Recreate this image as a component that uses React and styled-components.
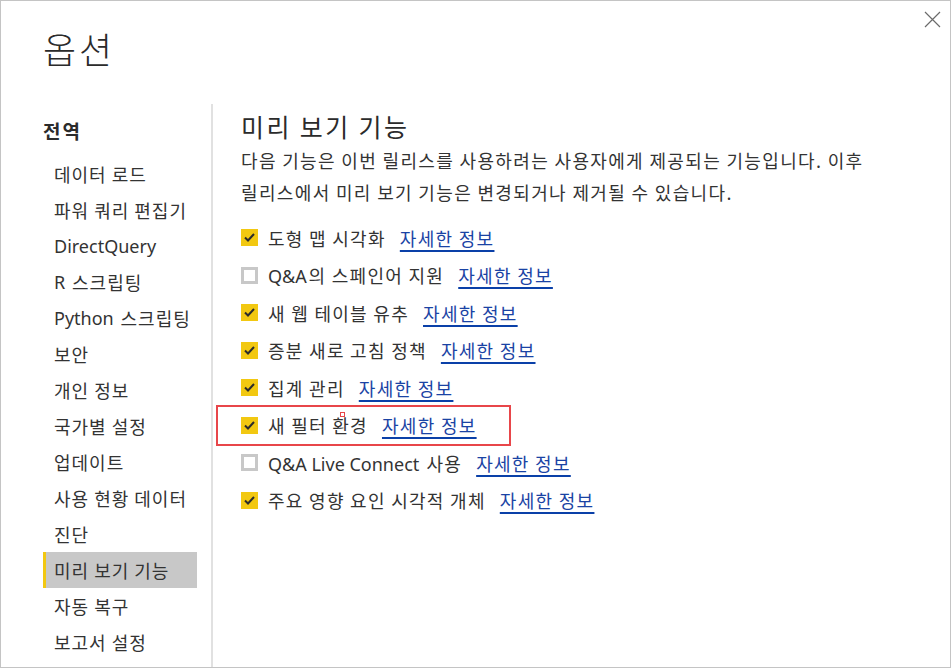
import React from 'react';
import styled, { createGlobalStyle } from 'styled-components';

const navItems = [
  '데이터 로드',
  '파워 쿼리 편집기',
  'DirectQuery',
  'R 스크립팅',
  'Python 스크립팅',
  '보안',
  '개인 정보',
  '국가별 설정',
  '업데이트',
  '사용 현황 데이터',
  '진단',
  '미리 보기 기능',
  '자동 복구',
  '보고서 설정',
];

const features = [
  { label: '도형 맵 시각화', checked: true },
  { label: 'Q&A의 스페인어 지원', checked: false },
  { label: '새 웹 테이블 유추', checked: true },
  { label: '증분 새로 고침 정책', checked: true },
  { label: '집계 관리', checked: true },
  { label: '새 필터 환경', checked: true, highlight: true },
  { label: 'Q&A Live Connect 사용', checked: false },
  { label: '주요 영향 요인 시각적 개체', checked: true },
];

// Latin runs get their own font and no extra tracking
const Mixed = ({ text }) =>
  text
    .split(/([A-Za-z&]+(?: [A-Za-z&]+)*)/)
    .map((part, i) => (i % 2 ? <Latin key={i}>{part}</Latin> : part));

const App = () => {
  return (
    <>
      <GlobalStyle />
      <Window>
        <CloseButton aria-label="닫기">
          <svg width="17" height="17" viewBox="0 0 17 17">
            <path d="M1 1 L16 16 M16 1 L1 16" stroke="#6b6b6b" strokeWidth="1.2" fill="none" />
          </svg>
        </CloseButton>
        <Header>
          <Title>옵션</Title>
        </Header>
        <Body>
          <Nav>
            <NavHeading>전역</NavHeading>
            {navItems.map((item) => (
              <NavItem key={item} $active={item === '미리 보기 기능'}>
                <Mixed text={item} />
              </NavItem>
            ))}
          </Nav>
          <Content>
            <Heading>미리 보기 기능</Heading>
            <Description>
              다음 기능은 이번 릴리스를 사용하려는 사용자에게 제공되는 기능입니다. 이후
              <br />
              릴리스에서 미리 보기 기능은 변경되거나 제거될 수 있습니다.
            </Description>
            <FeatureList>
              {features.map((f) => (
                <FeatureRow key={f.label} $highlight={f.highlight}>
                  <CheckBox $checked={f.checked}>
                    {f.checked && (
                      <svg width="11" height="9" viewBox="0 0 11 9">
                        <path d="M1 4.5 L4 7.5 L10 1" stroke="#2b2b2b" strokeWidth="2" fill="none" />
                      </svg>
                    )}
                  </CheckBox>
                  <FeatureLabel>
                    <Mixed text={f.label} />
                    {f.highlight && <Marker />}
                  </FeatureLabel>
                  <MoreLink href="#">자세한 정보</MoreLink>
                </FeatureRow>
              ))}
            </FeatureList>
          </Content>
        </Body>
      </Window>
    </>
  );
};

export default App;

const GlobalStyle = createGlobalStyle`
  html, body {
    margin: 0;
    padding: 0;
    background: #ffffff;
  }
  body {
    font-family: "Noto Sans CJK KR", "Noto Sans", sans-serif;
    color: #333333;
  }
`;

const Latin = styled.span`
  font-family: "Noto Sans", "Noto Sans CJK KR", sans-serif;
  letter-spacing: 0;
  margin-right: 0.1em;
`;

const Window = styled.div`
  position: relative;
  box-sizing: border-box;
  width: 951px;
  height: 668px;
  border: 1px solid #c4c4c4;
  background: #ffffff;
  overflow: hidden;
  display: flex;
  flex-direction: column;
`;

const CloseButton = styled.button`
  position: absolute;
  top: 9px;
  right: 8px;
  width: 19px;
  height: 19px;
  padding: 0;
  border: none;
  background: transparent;
  display: flex;
  align-items: center;
  justify-content: center;
`;

const Header = styled.div`
  height: 103px;
  padding-left: 42px;
  display: flex;
  align-items: center;
  box-sizing: border-box;
  padding-bottom: 10px;
`;

const Title = styled.h1`
  margin: 0;
  font-weight: 300;
  font-size: 36px;
  line-height: 44px;
  letter-spacing: 3px;
  color: #2b2b2b;
`;

const Body = styled.div`
  flex: 1;
  display: grid;
  grid-template-columns: 212px 1fr;
  min-height: 0;
`;

const Nav = styled.div`
  border-right: 2px solid #e1e1e1;
  padding-left: 42px;
  display: flex;
  flex-direction: column;
`;

const NavHeading = styled.div`
  height: 52px;
  display: flex;
  align-items: center;
  font-weight: 700;
  font-size: 19px;
  letter-spacing: 2px;
  color: #2b2b2b;
`;

const NavItem = styled.div`
  width: 154px;
  height: 36px;
  box-sizing: border-box;
  display: flex;
  align-items: center;
  padding-left: ${(p) => (p.$active ? '8px' : '11px')};
  border-left: ${(p) => (p.$active ? '3px solid #f2c811' : 'none')};
  background: ${(p) => (p.$active ? '#c8c8c8' : 'transparent')};
  font-size: 18px;
  letter-spacing: 1px;
  color: #333333;
  white-space: pre;
`;

const Content = styled.div`
  padding-left: 28px;
  padding-top: 4px;
`;

const Heading = styled.h2`
  margin: 0;
  height: 36px;
  display: flex;
  align-items: center;
  font-weight: 400;
  font-size: 25px;
  letter-spacing: 2.4px;
  color: #2b2b2b;
`;

const Description = styled.p`
  margin: 0;
  font-size: 18px;
  line-height: 32px;
  letter-spacing: 1.35px;
  color: #333333;
`;

const FeatureList = styled.div`
  margin-top: 11px;
  display: flex;
  flex-direction: column;
`;

const FeatureRow = styled.div`
  position: relative;
  height: 37.5px;
  display: flex;
  align-items: center;
  ${(p) =>
    p.$highlight &&
    `
    &::after {
      content: '';
      position: absolute;
      left: -25px;
      top: -2px;
      width: 295px;
      height: 41px;
      box-sizing: border-box;
      border: 2px solid #e8464a;
      pointer-events: none;
    }
  `}
`;

const CheckBox = styled.span`
  box-sizing: border-box;
  width: 17px;
  height: 17px;
  flex-shrink: 0;
  display: flex;
  align-items: center;
  justify-content: center;
  background: ${(p) => (p.$checked ? '#f2c811' : '#ffffff')};
  border: ${(p) => (p.$checked ? 'none' : '3px solid #c8c8c8')};
`;

const FeatureLabel = styled.span`
  position: relative;
  margin-left: 10px;
  font-size: 18px;
  letter-spacing: 1.3px;
  color: #333333;
  white-space: pre;
`;

const Marker = styled.span`
  position: absolute;
  left: 72px;
  top: 0px;
  width: 5px;
  height: 5px;
  box-sizing: border-box;
  border: 1.5px solid #e8464a;
  background: #ffffff;
`;

const MoreLink = styled.a`
  margin-left: 14px;
  font-size: 18px;
  letter-spacing: 1.3px;
  color: #1a43a4;
  text-decoration: underline;
  text-decoration-color: #0a40a8;
  text-decoration-thickness: 2px;
  text-underline-offset: 4px;
  white-space: nowrap;
`;
